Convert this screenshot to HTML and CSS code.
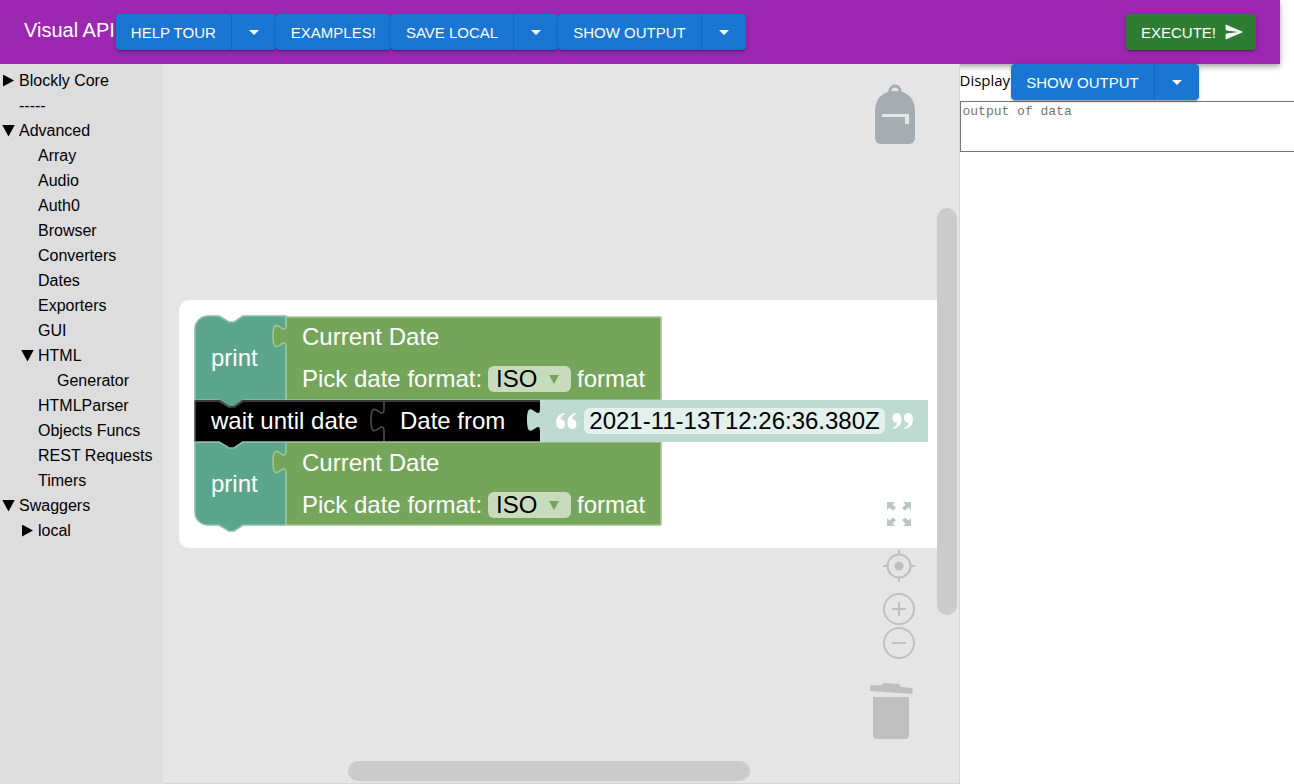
FILE: index.html
```html
<!DOCTYPE html>
<html lang="en">
<head>
<meta charset="utf-8">
<title>Visual API</title>
<link rel="stylesheet" href="styles.css">
</head>
<body>
<div class="app">
  <header class="app-bar">
    <h1 class="brand">Visual API</h1>
    <div class="split"><button class="btn">HELP TOUR</button><button class="btn caret" aria-label="More tours"></button></div>
    <div class="split"><button class="btn">EXAMPLES!</button></div>
    <div class="split"><button class="btn">SAVE LOCAL</button><button class="btn caret" aria-label="More save options"></button></div>
    <div class="split"><button class="btn">SHOW OUTPUT</button><button class="btn caret" aria-label="More output options"></button></div>
    <button class="btn execute">EXECUTE!
      <svg width="20" height="20" viewBox="0 0 24 24" fill="currentColor" aria-hidden="true"><path d="M2.01 21 23 12 2.01 3 2 10l15 2-15 2z"/></svg>
    </button>
  </header>
  <main class="main">
    <nav class="toolbox" aria-label="Blocks">
      <ul class="tree">
        <li><button class="row closed">Blockly Core</button></li>
        <li><button class="row">-----</button></li>
        <li><button class="row open">Advanced</button>
          <ul class="tree nested">
            <li><button class="row">Array</button></li>
            <li><button class="row">Audio</button></li>
            <li><button class="row">Auth0</button></li>
            <li><button class="row">Browser</button></li>
            <li><button class="row">Converters</button></li>
            <li><button class="row">Dates</button></li>
            <li><button class="row">Exporters</button></li>
            <li><button class="row">GUI</button></li>
            <li><button class="row open">HTML</button>
              <ul class="tree nested"><li><button class="row">Generator</button></li></ul>
            </li>
            <li><button class="row">HTMLParser</button></li>
            <li><button class="row">Objects Funcs</button></li>
            <li><button class="row">REST Requests</button></li>
            <li><button class="row">Timers</button></li>
          </ul>
        </li>
        <li><button class="row open">Swaggers</button>
          <ul class="tree nested"><li><button class="row closed">local</button></li></ul>
        </li>
      </ul>
    </nav>

    <section class="workspace" aria-label="Workspace">
      <div class="sheet"></div>
      <div class="stack">
        <svg class="shapes" width="736" height="220" viewBox="194 315 736 220" aria-hidden="true">
          <g stroke-width="1.600" stroke-linejoin="round">
            <path class="s-print" d="M195 329a13 13 0 0 1 13-13H219l10 6h5l9-6H286V400H195z"/>
            <path class="s-date" d="M286 317H661V400H286V348C286 332 273 361 273 336S286 340 286 324z"/>
            <path class="s-print" d="M195 442H286V525H243l-9 6h-5l-10-6H208a13 13 0 0 1-13-13z"/>
            <path class="s-date" d="M286 442H661V525H286V474C286 458 273 487 273 462S286 466 286 450z"/>
            <path class="f-black" d="M195 400H540V442H243l-9 6h-5l-10-6H195z"/>
            <path class="f-print" d="M218 399l11 7h5l10-7z"/>
            <path class="l-black" d="M195 442V401H219l10 6h5l9-6H540M384 401V408C384 424 371 395 371 420S384 416 384 432V442"/>
            <path class="l-print" d="M195 442H219l10 6h5l9-6H286"/>
            <path class="l-date" d="M286 442H540"/>
            <path class="f-text" d="M540 400H928V442H540V432C540 416 527 445 527 420S540 424 540 408z"/>
          </g>
        </svg>
        <div class="block tall">
          <span class="cell print">print</span>
          <div class="cell date">
            <span class="line">Current Date</span>
            <div class="line"><label for="fmt1">Pick date format:</label>
              <span class="picker"><select id="fmt1"><option>ISO</option></select></span><span>format</span></div>
          </div>
        </div>
        <div class="block">
          <span class="cell wait">wait until date</span>
          <label class="cell from" for="when">Date from</label>
          <span class="cell text">
            <svg width="21" height="16" viewBox="0 0 21 16" fill="#fff" aria-hidden="true"><path id="q" d="M8 0 9 1C6 2 4.500 4 4.500 6.500 7 5.500 9 8 9 11c0 3-1.500 5-4.500 5C1.500 16 0 13 0 9.500 0 4.500 3 1 8 0zM19.500 0l1 1C17.500 2 16 4 16 6.500c2.500-1 4.500 1.500 4.500 4.500 0 3-1.500 5-4.500 5-3 0-4.500-3-4.500-6.500 0-5 3-8.500 8-9.500z"/></svg>
            <input id="when" class="field" type="text" value="2021-11-13T12:26:36.380Z">
            <svg width="21" height="16" viewBox="0 0 21 16" fill="#fff" aria-hidden="true"><use href="#q" transform="rotate(180 10.500 8)"/></svg>
          </span>
        </div>
        <div class="block tall">
          <span class="cell print">print</span>
          <div class="cell date">
            <span class="line">Current Date</span>
            <div class="line"><label for="fmt2">Pick date format:</label>
              <span class="picker"><select id="fmt2"><option>ISO</option></select></span><span>format</span></div>
          </div>
        </div>
      </div>

      <button class="tool backpack" aria-label="Backpack">
        <svg width="40" height="60" viewBox="0 0 40 60"><path fill="none" stroke="#a5adb0" stroke-width="3" d="M15 9V7a5 5 0 0 1 10 0v2"/><path fill="#a5adb0" d="M0 27C0 14 8 7 20 7s20 7 20 20v27a6 6 0 0 1-6 6H6a6 6 0 0 1-6-6z"/><path fill="#e5e5e5" d="M7 30H34V40H30V33H7z"/></svg>
      </button>
      <button class="tool fullscreen" aria-label="Full screen">
        <svg width="24" height="24" viewBox="0 0 24 24" fill="#b9c5ca"><path id="c" d="M0 0H8L5.500 2.500 9 6 6 8.500 2.500 5.500 0 8z"/><use href="#c" transform="matrix(-1 0 0 1 24 0)"/><use href="#c" transform="matrix(1 0 0 -1 0 24)"/><use href="#c" transform="matrix(-1 0 0 -1 24 24)"/></svg>
      </button>
      <div class="zoom">
        <button class="tool center" aria-label="Center"><svg width="32" height="32" viewBox="0 0 32 32"><g fill="none" stroke="#bfbfbf" stroke-width="2"><circle cx="16" cy="16" r="11.500"/><path d="M16 0v4M16 28v4M0 16h4M28 16h4"/></g><circle cx="16" cy="16" r="4.500" fill="#bfbfbf"/></svg></button>
        <button class="tool" aria-label="Zoom in"><svg width="32" height="32" viewBox="0 0 32 32" fill="none" stroke="#bfbfbf" stroke-width="2"><circle cx="16" cy="16" r="15"/><path d="M9 16H23M16 9V23"/></svg></button>
        <button class="tool" aria-label="Zoom out"><svg width="32" height="32" viewBox="0 0 32 32" fill="none" stroke="#bfbfbf" stroke-width="2"><circle cx="16" cy="16" r="15"/><path d="M9 16H23"/></svg></button>
      </div>
      <button class="tool trash" aria-label="Trash">
        <svg width="43" height="56" viewBox="0 0 43 56" fill="#bfbfbf"><path d="M0 2 11 2.500 14 0 29 1 31 4 42.500 5V11L0 8zM3 14H39V52a4 4 0 0 1-4 4H7a4 4 0 0 1-4-4z"/></svg>
      </button>
      <div class="bar vertical"></div>
      <div class="bar horizontal"></div>
    </section>

    <section class="output">
      <div class="output-head">
        <label for="out">Display</label>
        <div class="split"><button class="btn">SHOW OUTPUT</button><button class="btn caret" aria-label="More display options"></button></div>
      </div>
      <textarea id="out" class="result" placeholder="output of data"></textarea>
    </section>
  </main>
</div>
</body>
</html>
```
FILE: styles.css
```css
* { box-sizing: border-box; }
body {
  margin: 0;
  overflow: hidden;
  background: #fff;
  color: #000;
  font: 16px "Liberation Sans", Arial, sans-serif;
}
button { border: 0; margin: 0; padding: 0; background: none; color: inherit; font: inherit; cursor: pointer; }
.app { display: flex; flex-direction: column; height: 100vh; }

.app-bar {
  position: relative;
  z-index: 1;
  display: flex;
  align-items: center;
  flex: none;
  height: 64px;
  margin-right: 14px;
  padding: 0 24px;
  background: #9c27b0;
  color: #fff;
  box-shadow: 0 2px 4px -1px rgba(0,0,0,.2), 0 4px 5px rgba(0,0,0,.14), 0 1px 10px rgba(0,0,0,.12);
}
.brand { margin: 0; padding: 0 1px 4px 0; font-size: 20px; font-weight: 400; white-space: nowrap; }
.split { display: flex; border-radius: 4px; box-shadow: 0 3px 1px -2px rgba(0,0,0,.2), 0 2px 2px rgba(0,0,0,.14), 0 1px 5px rgba(0,0,0,.12); }
.btn {
  height: 36px;
  padding: 0 15px;
  border-radius: 4px;
  background: #1976d2;
  color: #fff;
  font-size: 15px;
  white-space: nowrap;
}
.split .btn:not(:last-child) { border-right: 1px solid #1565c0; border-radius: 4px 0 0 4px; }
.caret { display: grid; place-items: center; width: 44px; }
.split .caret { border-radius: 0 4px 4px 0; }
.caret::before { content: ""; border: 5px solid transparent; border-top-color: #fff; border-bottom: 0; }
.execute {
  display: flex;
  align-items: center;
  gap: 8px;
  margin-left: auto;
  padding: 0 12px 0 15px;
  background: #2e7d32;
  box-shadow: 0 3px 1px -2px rgba(0,0,0,.2), 0 2px 2px rgba(0,0,0,.14), 0 1px 5px rgba(0,0,0,.12);
}

.main { display: grid; grid-template-columns: 163px calc(75% - 174px) 1fr; flex: 1; min-height: 0; }

.toolbox { position: relative; z-index: 2; padding-top: 4px; background: #ddd; }
.tree { margin: 0; padding: 0; list-style: none; }
.nested { padding-left: 19px; }
.row { display: flex; align-items: center; width: 100%; height: 25px; text-align: left; white-space: nowrap; }
.row::before { content: ""; flex: none; width: 13px; height: 12px; margin: 0 4px 0 2px; }
.closed::before { background: #000; clip-path: polygon(1px 0, 12px 50%, 1px 100%); }
.open::before { background: #000; clip-path: polygon(0 0, 100% 0, 50% 100%); }

.workspace {
  position: relative;
  z-index: 2;
  overflow: hidden;
  border: 1px solid #d6d6d6;
  border-width: 0 1px 1px 0;
  background: #e5e5e5;
}
.sheet { position: absolute; left: 16px; right: 22px; top: 236px; height: 248px; border-radius: 10px 0 0 10px; background: #fff; }

.stack { position: absolute; left: 32px; top: 252px; color: #fff; font-size: 24px; white-space: nowrap; }
.shapes { position: absolute; left: -1px; top: -1px; }
.block { position: relative; display: flex; height: 42px; }
.tall { height: 84px; }
.cell { display: flex; align-items: center; padding-left: 16px; }
.print { width: 91px; }
.date { flex-direction: column; align-items: flex-start; }
.line { display: flex; align-items: center; gap: 6px; height: 42px; }
.wait { width: 189px; }
.from { width: 156px; }
.text { gap: 7px; }
.picker { display: inline-grid; align-items: center; }
.picker > select, .picker::after { grid-area: 1 / 1; }
.picker::after { content: ""; justify-self: end; margin-right: 12px; border: 5px solid transparent; border-top: 9px solid #75a55b; border-bottom: 0; pointer-events: none; }
.picker select {
  appearance: none;
  width: 83px;
  height: 26px;
  margin: 0;
  padding: 0 8px;
  border: 0;
  border-radius: 6px;
  background: #c8dbbd;
  color: #000;
  font: inherit;
  line-height: 26px;
}
.field { width: 301px; height: 26px; padding: 0 4px; border: 0; border-radius: 6px; background: #e4f0ec; color: #000; font: inherit; text-align: center; }

.s-print { fill: #5ba58c; stroke: #8cc0ae; }
.s-date { fill: #75a55b; stroke: #a3c492; }
.f-black { fill: #000; }
.f-print { fill: #5ba58c; }
.f-text { fill: #bddbd1; }
.l-black, .l-print, .l-date { fill: none; }
.l-black { stroke: #4d4d4d; }
.l-print { stroke: #8cc0ae; }
.l-date { stroke: #9ec08c; }

.tool svg { display: block; }
.backpack, .fullscreen, .zoom, .trash, .bar { position: absolute; }
.backpack { right: 44px; top: 20px; }
.fullscreen { right: 48px; bottom: 257px; }
.zoom { display: flex; flex-direction: column; gap: 2px; right: 44px; bottom: 124px; }
.center { margin-bottom: 9px; }
.trash { right: 46px; bottom: 44px; }
.bar { border-radius: 10px; background: #cbcbcb; }
.vertical { right: 2px; top: 20%; width: 20px; height: 407px; }
.horizontal { left: 185px; bottom: 2px; width: 402px; height: 20px; }

.output { min-width: 0; }
.output-head { display: flex; align-items: flex-start; height: 37px; }
.output-head label { padding: 6px 1px 0 0; font: 15px "Open Sans", "Noto Sans", sans-serif; }
.output-head .split { position: relative; z-index: 2; }
.result {
  display: block;
  width: calc(100% + 20px);
  height: 51px;
  margin: 0;
  padding: 2px;
  border: 1px solid #767676;
  border-radius: 0;
  resize: none;
  font: 13px "Liberation Mono", "Courier New", monospace;
}
```
